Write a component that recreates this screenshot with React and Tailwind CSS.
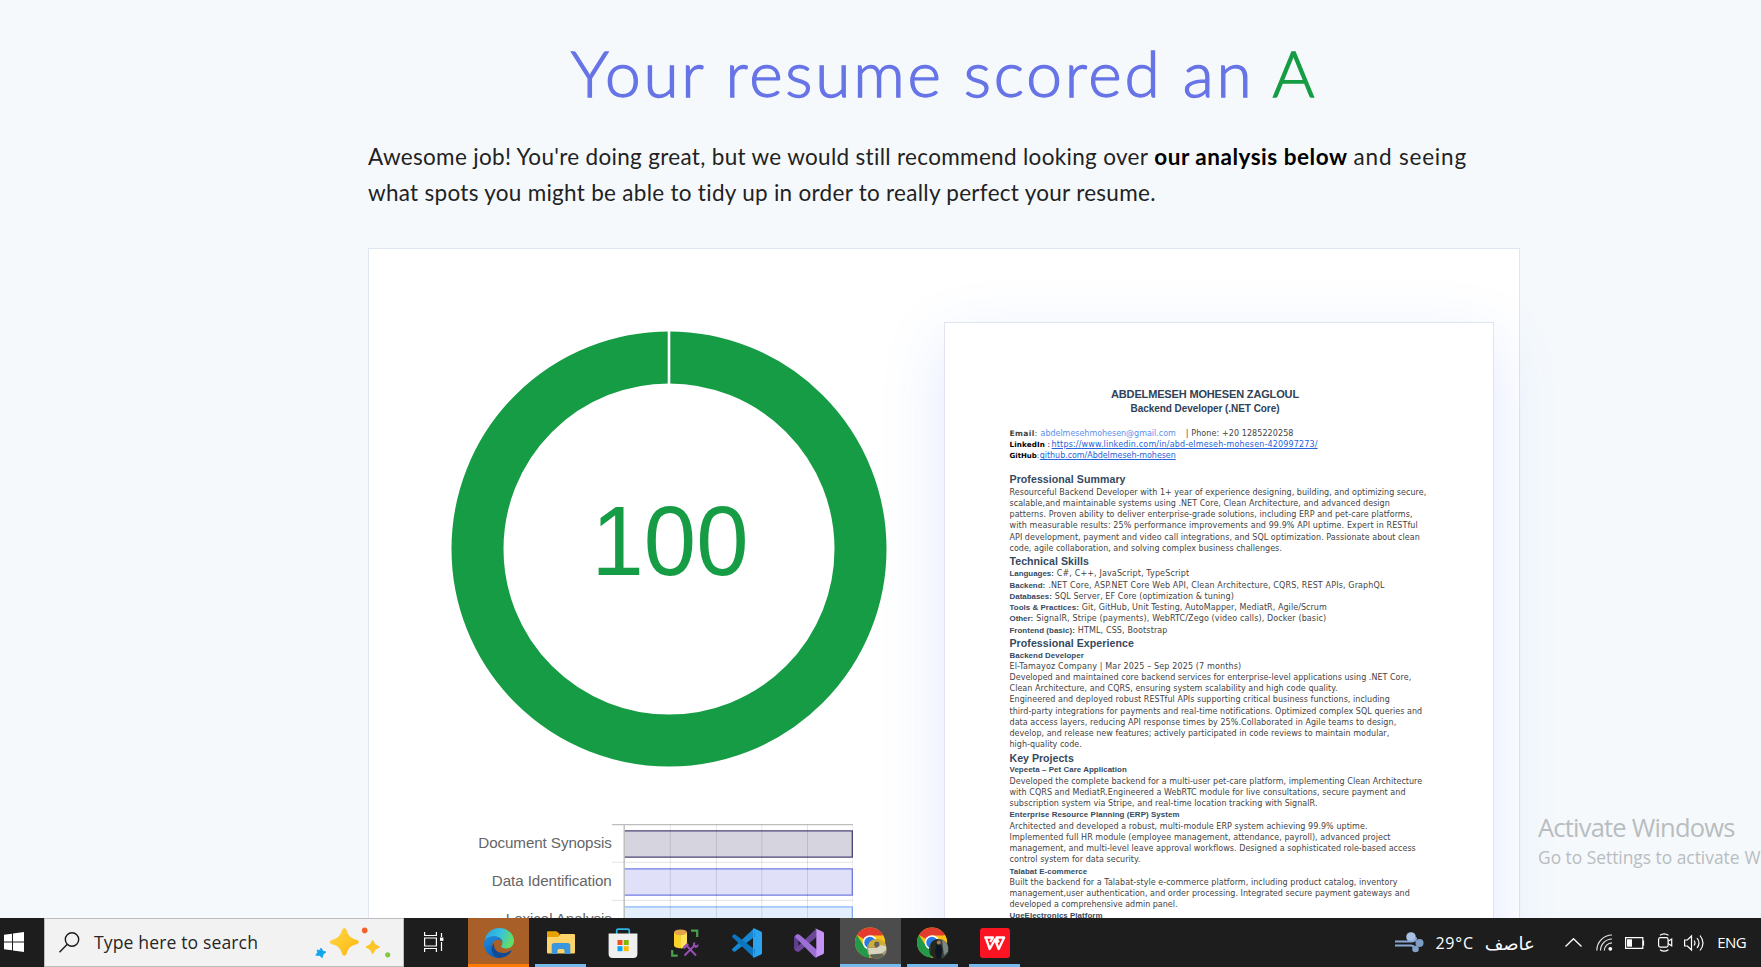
import { useLayoutEffect, useRef } from "react";

/* Text run whose tracking is adjusted so it spans an exact width. */
function Fit({ w, className = "", children }) {
  const ref = useRef(null);
  useLayoutEffect(() => {
    const el = ref.current;
    el.style.letterSpacing = "0px";
    const natural = el.getBoundingClientRect().width;
    el.style.letterSpacing = `${(w - natural) / (el.textContent.length - 0.5)}px`;
  }, [w]);
  return (
    <span ref={ref} className={`inline-block whitespace-pre ${className}`}>
      {children}
    </span>
  );
}

const BODY = [
  ["h", "Professional Summary", 116, 14.4],
  ["b", "Resourceful Backend Developer with 1+ year of experience designing, building, and optimizing secure,", 416.7],
  ["b", "scalable,and maintainable systems using .NET Core, Clean Architecture, and advanced design", 380.3],
  ["b", "patterns. Proven ability to deliver enterprise-grade solutions, including ERP and pet-care platforms,", 403],
  ["b", "with measurable results: 25% performance improvements and 99.9% API uptime. Expert in RESTful", 408.3],
  ["b", "API development, payment and video call integrations, and SQL optimization. Passionate about clean", 410.3],
  ["b", "code, agile collaboration, and solving complex business challenges.", 272.3],
  ["h", "Technical Skills", 79.3, 14.3],
  ["k", "Languages:", 44.3, "C#, C++, JavaScript, TypeScript", 132.3],
  ["k", "Backend:", 35.7, ".NET Core, ASP.NET Core Web API, Clean Architecture, CQRS, REST APIs, GraphQL", 336.3],
  ["k", "Databases:", 42.3, "SQL Server, EF Core (optimization & tuning)", 179],
  ["k", "Tools & Practices:", 69.3, "Git, GitHub, Unit Testing, AutoMapper, MediatR, Agile/Scrum", 245],
  ["k", "Other:", 23.7, "SignalR, Stripe (payments), WebRTC/Zego (video calls), Docker (basic)", 290],
  ["k", "Frontend (basic):", 65.3, "HTML, CSS, Bootstrap", 89.7],
  ["h", "Professional Experience", 124.3, 13.7],
  ["s", "Backend Developer", 74.3],
  ["b", "El-Tamayoz Company | Mar 2025 – Sep 2025 (7 months)", 231.7],
  ["b", "Developed and maintained core backend services for enterprise-level applications using .NET Core,", 401.7],
  ["b", "Clean Architecture, and CQRS, ensuring system scalability and high code quality.", 328],
  ["b", "Engineered and deployed robust RESTful APIs supporting critical business functions, including", 380.3],
  ["b", "third-party integrations for payments and real-time notifications. Optimized complex SQL queries and", 412.7],
  ["b", "data access layers, reducing API response times by 25%.Collaborated in Agile teams to design,", 386.7],
  ["b", "develop, and release new features; actively participated in code reviews to maintain modular,", 379.7],
  ["b", "high-quality code.", 72.3],
  ["h", "Key Projects", 64.3, 13.7],
  ["s", "Vepeeta – Pet Care Application", 117.3],
  ["b", "Developed the complete backend for a multi-user pet-care platform, implementing Clean Architecture", 412.7],
  ["b", "with CQRS and MediatR.Engineered a WebRTC module for live consultations, secure payment and", 396],
  ["b", "subscription system via Stripe, and real-time location tracking with SignalR.", 308],
  ["s", "Enterprise Resource Planning (ERP) System", 170],
  ["b", "Architected and developed a robust, multi-module ERP system achieving 99.9% uptime.", 358],
  ["b", "Implemented full HR module (employee management, attendance, payroll), advanced project", 381],
  ["b", "management, and multi-level leave approval workflows. Designed a sophisticated role-based access", 406.3],
  ["b", "control system for data security.", 130.7],
  ["s", "Talabat E-commerce", 77.7],
  ["b", "Built the backend for a Talabat-style e-commerce platform, including product catalog, inventory", 388],
  ["b", "management,user authentication, and order processing. Integrated secure payment gateways and", 400.3],
  ["b", "developed a comprehensive admin panel.", 168],
  ["s", "UgeElectronics Platform", 93],
];

function ResumeLine({ row }) {
  const [kind, text, w, extra, w2] = row;
  if (kind === "h")
    return (
      <div className="flex items-center font-['Liberation_Sans',sans-serif] text-[10.6px] leading-none font-bold text-[#34495e]" style={{ height: extra }}>
        <Fit w={w}>{text}</Fit>
      </div>
    );
  if (kind === "s")
    return (
      <div className="flex h-[11.24px] items-center font-['Liberation_Sans',sans-serif] text-[7.9px] leading-none font-bold text-[#34495e]">
        <Fit w={w}>{text}</Fit>
      </div>
    );
  if (kind === "k")
    return (
      <div className="flex h-[11.28px] items-center gap-[3px] leading-none">
        <Fit w={w} className="font-['Liberation_Sans',sans-serif] text-[7.9px] font-bold text-[#34495e]">{text}</Fit>
        <Fit w={w2}>{extra}</Fit>
      </div>
    );
  return (
    <div className="flex h-[11.24px] items-center leading-none">
      <Fit w={w}>{text}</Fit>
    </div>
  );
}

function Resume() {
  return (
    <div className="h-[700px] w-[550px] shrink-0 border border-[#dfe4f0] bg-white pt-[64.5px] pl-[64.5px] font-['DejaVu_Sans',sans-serif] text-[8px] text-[#444] shadow-[0_20px_60px_rgba(70,120,255,0.16)]">
      <div className="flex w-[391px] flex-col items-center font-['Liberation_Sans',sans-serif] leading-none font-bold text-[#2f4256]">
        <div className="flex h-[14px] items-center text-[11px]">
          <Fit w={188}>ABDELMESEH MOHESEN ZAGLOUL</Fit>
        </div>
        <div className="flex h-[14px] items-center text-[10px]">
          <Fit w={149}>Backend Developer (.NET Core)</Fit>
        </div>
      </div>
      <div className="mt-[12.5px] flex h-[11.4px] items-center leading-none">
        <span className="flex w-[31px]">
          <Fit w={28} className="text-[7.6px]"><b>Email</b>:</Fit>
        </span>
        <Fit w={135.3} className="text-[#5b8ff0]">abdelmesehmohesen@gmail.com</Fit>
        <Fit w={107.7} className="ml-[10px]">| Phone: +20 1285220258</Fit>
      </div>
      <div className="flex h-[11.4px] items-center gap-[1.5px] leading-none">
        <Fit w={40.5} className="text-[7.2px] text-black"><b>LinkedIn</b> :</Fit>
        <Fit w={266} className="text-[#2563d8] underline">https://www.linkedin.com/in/abd-elmeseh-mohesen-420997273/</Fit>
      </div>
      <div className="mb-[10.4px] flex h-[11.4px] items-center gap-[0.6px] leading-none">
        <Fit w={29.7} className="text-[7px] text-black"><b>GitHub</b>:</Fit>
        <Fit w={136} className="text-[#2563d8] underline">github.com/Abdelmeseh-mohesen</Fit>
      </div>
      {BODY.map((row, i) => (
        <ResumeLine key={i} row={row} />
      ))}
    </div>
  );
}

function Donut() {
  return (
    <svg width="436" height="436" viewBox="0 0 436 436" className="block">
      <circle cx="218" cy="218" r="191.5" fill="none" stroke="#169c45" strokeWidth="52" />
      <path d="M218 0V54" stroke="#fff" strokeWidth="2.6" />
      <text x="140.5" y="244" fontSize="98" textLength="157" lengthAdjust="spacingAndGlyphs" fill="#169c45" className="font-['Liberation_Sans',sans-serif]">100</text>
    </svg>
  );
}

const BARS = [
  { y: 6, label: "Document Synopsis", w: 133.5, stroke: "#4a4578", fill: "#d6d5df" },
  { y: 44, label: "Data Identification", w: 120, stroke: "#727ce6", fill: "#e0e1f9" },
  { y: 82, label: "Lexical Analysis", w: 106, stroke: "#86b6f7", fill: "#e3eefc" },
];

function BarChart() {
  return (
    <svg width="400" height="110" viewBox="0 0 400 110" className="block">
      {BARS.map((b) => (
        <g key={b.label}>
          <rect x="171" y={b.y + 0.8} width="228.5" height="26.4" fill={b.fill} />
          <path d={`M171 ${b.y + 0.8}h228.3v26.4H171`} fill="none" stroke={b.stroke} strokeWidth="1.3" />
          <text x="158.8" y={b.y + 18.4} textAnchor="end" textLength={b.w} fontSize="15.2" fill="#666" className="font-['Liberation_Sans',sans-serif]">{b.label}</text>
        </g>
      ))}
      <path d="M217.3 1v109M263.4 1v109M308.8 1v109M354.5 1v109M400 1v109M159 38.3h12M159 76.3h12" stroke="#000" strokeOpacity="0.11" strokeWidth="1" />
      <path d="M171 38.3h229M171 76.3h229" stroke="#000" strokeOpacity="0.11" />
      <path d="M159 0.6h241" stroke="#bdbdbd" strokeWidth="1.2" />
      <path d="M171.2 1v109" stroke="#bdbdbd" strokeWidth="1.4" />
    </svg>
  );
}

const EdgeIcon = () => (
  <svg width="30" height="30" viewBox="0 0 30 30">
    <defs>
      <linearGradient id="e1" x1="0" y1="0" x2="1" y2="0.3">
        <stop offset="0" stopColor="#2a9fe0" />
        <stop offset="0.55" stopColor="#35c1e0" />
        <stop offset="1" stopColor="#62dd6a" />
      </linearGradient>
      <linearGradient id="e2" x1="0" y1="0" x2="0.4" y2="1">
        <stop offset="0" stopColor="#1f8ee0" />
        <stop offset="1" stopColor="#0b62b8" />
      </linearGradient>
    </defs>
    <path d="M0.6 12.5C1.8 5.2 8 0 15 0c8.600 0 15 6 15 12.700 0 4.600-3.400 7.800-7.700 7.800-3.600 0-5.100-1.300-5.100-2.300 0-.8 1.200-1.200 1.200-3.500C18.400 11.600 15 8.600 11 8.600c-5 0-9 2-10.400 3.900z" fill="url(#e1)" />
    <path d="M.4 13C2 9.800 6 8.300 10 8.300c4.500 0 8.400 2.400 8.400 6-1.200-2-3-2.600-4.600-2.600C10 11.700 8 15 8 18.600c0 5 3.800 9.300 8.300 10.400-.8.800-2 1-3 .9C5 29 0 22.500 0 16z" fill="url(#e2)" />
    <path d="M10.300 15.200c-1.400 5.400 2.600 9.800 8.200 9.800 4 0 6.700-1.600 8.200-2.500.6-.3 1 .2.7.8-2 3.600-6.600 6.700-11.900 6.700C10.800 30 7.600 25 7.600 20.500c0-2.200 1-4.300 2.700-5.300z" fill="#124a96" />
  </svg>
);

const FolderIcon = () => (
  <svg width="28" height="24" viewBox="0 0 28 24">
    <path d="M0 1.200Q0 .2 1 .2h8.500l3 2.600V8H0z" fill="#e8a200" />
    <path d="M0 6h11l2.500-3H27q1 0 1 1v17.500q0 1-1 1H1q-1 0-1-1z" fill="#fdd469" />
    <path d="M4.700 23V14.500q0-2.500 2.500-2.500h13.600q2.500 0 2.500 2.500V23h-5.800v-3.500q0-1.500-1.500-1.500h-4q-1.500 0-1.500 1.500V23z" fill="#3a96dd" />
  </svg>
);

const StoreIcon = () => (
  <svg width="30" height="30" viewBox="0 0 30 30">
    <path d="M8.700 7V2.800q0-1.600 1.600-1.600h9.400q1.600 0 1.600 1.600V7" fill="none" stroke="#2db4e8" strokeWidth="1.700" />
    <path d="M.6 5.500h28.800V26q0 4-4 4H4.600q-4 0-4-4z" fill="#f0f0f0" />
    <path d="M9.500 12h5v5h-5z" fill="#f25022" />
    <path d="M15.700 12h5v5h-5z" fill="#7fba00" />
    <path d="M9.500 18.200h5v5h-5z" fill="#00a4ef" />
    <path d="M15.700 18.200h5v5h-5z" fill="#ffb900" />
  </svg>
);

const SqlIcon = () => (
  <svg width="28" height="28" viewBox="0 0 28 28">
    <path d="M3 3.500v13c0 1.600 3.200 2.800 6.500 2.800s6.500-1.200 6.500-2.800v-13z" fill="#f8d22a" />
    <path d="M10 6v13.300c3.500 0 6-1.200 6-2.800v-13z" fill="#ffe45c" />
    <ellipse cx="9.500" cy="3.300" rx="6.500" ry="2.900" fill="#e3a34b" />
    <path d="M20 1.700h6.200V8M1.200 21v5.700h5.500" fill="none" stroke="#47a04b" strokeWidth="2.200" />
    <path d="M13.500 26.500 24 16M15.500 16.500l9.500 10" stroke="#9a4fb8" strokeWidth="1.900" />
    <path d="M11.500 18.300l4.500-4.300 2 1.800-4.600 4.400z" fill="#9a4fb8" />
    <path d="M22 14l2.500-.8-.7 2.300 1.700 1 1.800-1.500.2 2.300-2.600 2-3-2.500z" fill="#9a4fb8" />
  </svg>
);

const VsCodeIcon = () => (
  <svg width="30" height="30" viewBox="0 0 30 30">
    <path d="M22 .3 29 3.500q1 .5 1 1.500v20q0 1-1 1.500L22 29.700z" fill="#2ba3ee" />
    <path d="M22 .3 23 8.500 3.200 23.500q-.8.600-1.500 0L.4 22.200q-.7-.7 0-1.400z" fill="#1687d2" />
    <path d="M22 29.700 23 21.500 3.200 6.500q-.8-.6-1.500 0L.4 7.800q-.7.700 0 1.400z" fill="#0d74c0" />
    <path d="M22 .3v29.400l-1-1V1z" fill="#2ba3ee" />
  </svg>
);

const VsIcon = () => (
  <svg width="30" height="30" viewBox="0 0 30 30">
    <path d="M0 8.500 4.500 6v18L0 21.500z" fill="#5f3d8b" />
    <path d="M1.500 22.800Q3.800 24.700 6.500 22.500L22.500 9V.4L1 21z" fill="#6c4699" />
    <path d="M1.500 7.200Q3.800 5.300 6.500 7.500L23 22v7.500L20.500 29 1 9z" fill="#9d70d6" />
    <path d="M21 .3 29 3.800q1 .5 1 1.600v19.200q0 1.100-1 1.600l-8 3.500q1.300-.7 1.300-2.500V2.800Q22.300 1 21 .3z" fill="#c493f5" />
  </svg>
);

const ChromeIcon = ({ dark }) => (
  <svg width="32" height="32" viewBox="0 0 32 32">
    <circle cx="15" cy="15.500" r="15" fill="#fbc116" />
    <path d="M15 15.500 2 8A15 15 0 0 1 28 8z" fill="#e33b2e" />
    <path d="M2 8a15 15 0 0 0 12 22.500L21 19 9 19z" fill="#229a4a" />
    <path d="M15 8.500h13.300A15 15 0 0 1 14 30.500L21.200 19z" fill="#fbc116" />
    <circle cx="15" cy="15.500" r="7.300" fill="#fff" />
    <circle cx="15" cy="15.500" r="5.700" fill="#2c7be5" />
    <circle cx="21.800" cy="22" r="10" fill={dark ? "#39453f" : "#a39a76"} />
    {dark ? (
      <g>
        <path d="M14 16a10 10 0 0 1 7-4v20a10 10 0 0 1-8-5z" fill="#24291f" />
        <path d="M25 12.600a10 10 0 0 1 6 7v5l-4 4z" fill="#7c8685" />
        <path d="M19.500 17.500h4.500l1.500 6-1.500 8.300h-4.500L18 24z" fill="#111722" />
        <circle cx="21.800" cy="15.500" r="2" fill="#a87958" />
      </g>
    ) : (
      <g>
        <path d="M14 16a10 10 0 0 1 17 2l-7 3-10-1z" fill="#cfae35" />
        <path d="M13 21h8l3-3 7 1v4l-6 5H14z" fill="#d9d4bd" />
        <path d="M20 14.500l4 .5.5 4-3.500 2-2-3z" fill="#65605a" />
        <path d="M15 27.500l12-1 2 2a10 10 0 0 1-13 1.500z" fill="#5f6455" />
      </g>
    )}
  </svg>
);

const WpsIcon = () => (
  <svg width="30" height="30" viewBox="0 0 30 30">
    <rect width="30" height="30" rx="3" fill="#fb1522" />
    <path d="M4.300 9.500H13l-2.800 4.500M5.700 9.500l4 11.500L15 11.500 18.700 21l5.500-11.500H16.500l2.200 5" fill="none" stroke="#fff" strokeWidth="2.300" strokeLinejoin="round" />
  </svg>
);

const APPS = [
  { id: "edge", icon: <EdgeIcon />, cell: "bg-[#a85f28]", bar: "w-full bg-[#ff7a00]" },
  { id: "explorer", icon: <FolderIcon />, cell: "", bar: "w-[51px] bg-[#76b9ed]" },
  { id: "store", icon: <StoreIcon />, cell: "", bar: "" },
  { id: "sql", icon: <SqlIcon />, cell: "", bar: "" },
  { id: "vscode", icon: <VsCodeIcon />, cell: "", bar: "" },
  { id: "vs", icon: <VsIcon />, cell: "", bar: "" },
  { id: "chrome", icon: <ChromeIcon />, cell: "bg-[#4c4c4c]", bar: "w-full bg-[#76b9ed]" },
  { id: "chrome2", icon: <ChromeIcon dark />, cell: "", bar: "w-[51px] bg-[#76b9ed]" },
  { id: "wps", icon: <WpsIcon />, cell: "", bar: "w-[51px] bg-[#76b9ed]" },
];

function Taskbar() {
  return (
    <footer className="flex h-[49px] shrink-0 bg-[#1d1d1d] font-['Open_Sans','Noto_Sans',sans-serif] text-white">
      <div className="flex w-[44px] items-center pb-px pl-1">
        <svg width="20" height="20" viewBox="0 0 20 20" fill="#fff">
          <path d="M0 2.800 8 1.700V9.400H0zM9 1.500 20 0v9.400H9zM0 10.400h8v7.800L0 17.200zM9 10.400h11V20L9 18.400z" />
        </svg>
      </div>
      <div className="flex w-[360px] items-center border border-[#bcbcbc] bg-[#f2f2f2] pl-[14px]">
        <svg width="21" height="21" viewBox="0 0 21 21" fill="none" stroke="#1a1a1a" strokeWidth="1.400">
          <circle cx="13" cy="7.500" r="6.700" />
          <path d="M8.300 12.300.5 20.200" />
        </svg>
        <Fit w={164} className="ml-[14px] text-[17.600px] text-[#262626]">Type here to search</Fit>
        <svg width="78" height="34" viewBox="0 0 78 34" className="ml-[55px]">
          <defs>
            <linearGradient id="st" x1="0" y1="0" x2="1" y2="1">
              <stop offset="0" stopColor="#ffd84a" />
              <stop offset="1" stopColor="#fbb70d" />
            </linearGradient>
          </defs>
          <path d="M31.300 2q1.800 0 2.600 3 1.600 6.500 8.500 8.400 3.400.8 3.400 2.600t-3.400 2.600q-6.900 1.900-8.500 8.400-.8 3-2.600 3t-2.600-3q-1.600-6.500-8.500-8.400-3.400-.8-3.400-2.600t3.400-2.600q6.900-1.900 8.500-8.400.8-3 2.600-3z" fill="url(#st)" />
          <path d="M59.700 14.200q1 0 1.400 1.800.8 2.800 3.600 3.600 1.900.5 1.900 1.500t-1.900 1.500q-2.800.8-3.600 3.600-.4 1.800-1.400 1.800t-1.400-1.800q-.8-2.800-3.600-3.600-1.900-.5-1.900-1.500t1.900-1.500q2.800-.8 3.600-3.600.4-1.800 1.400-1.800z" fill="#fcc52a" />
          <path d="M8 22l1.800 3 3.200 1-2.800 2.200-1 3.600-2.500-2.400-3.900-.2 1.800-2.700-.4-2.500 2.800.4z" fill="#12a5ee" stroke="#12a5ee" strokeWidth=".8" strokeLinejoin="round" />
          <circle cx="51.700" cy="4.400" r="2.800" fill="#f2622e" />
          <circle cx="74.700" cy="28.800" r="2.600" fill="#85c940" />
        </svg>
      </div>
      <div className="flex w-[64px] items-center pb-px pl-5">
        <svg width="21" height="20" viewBox="0 0 21 20" fill="none" stroke="#fff" strokeWidth="1.200">
          <path d="M.6 0v3.500h11.800V0M.6 20v-3.500h11.800V20M.6 6h11.800v8H.6zM17.500 1v4M17.500 10v9" />
          <path d="M16 5.500h3.400v3.400H16z" fill="#fff" stroke="none" />
        </svg>
      </div>
      <div className="flex gap-px">
        {APPS.map((a) => (
          <div key={a.id} className={`flex w-[61px] flex-col items-center ${a.cell}`}>
            <div className="flex flex-1 items-center pt-[3px]">{a.icon}</div>
            <div className={`h-[3px] ${a.bar}`} />
          </div>
        ))}
      </div>
      <div className="ml-auto flex items-center pr-[15px]">
        <svg width="29" height="21" viewBox="0 0 29 21" fill="none">
          <circle cx="16" cy="5" r="4.800" fill="#a9c1e2" />
          <circle cx="24.500" cy="11" r="4" fill="#7f9dc4" />
          <path d="M0 9.500h17q4-.5 4-4M0 13.500h16q4 .5 4.500 4" stroke="#8aa9d4" strokeWidth="2.200" />
          <circle cx="20.500" cy="17" r="3.300" fill="#7fa0c8" />
        </svg>
        <Fit w={38} className="ml-[11px] text-[16px]">29°C</Fit>
        <span className="ml-[10px] w-[51px] pt-px text-right font-['DejaVu_Sans',sans-serif] text-[18px] whitespace-nowrap" dir="rtl">عاصف</span>
        <svg width="17" height="9" viewBox="0 0 17 9" fill="none" stroke="#fff" strokeWidth="1.300" className="ml-[30px]">
          <path d="M.5 8.500l8-7.800 8 7.800" />
        </svg>
        <svg width="17" height="17" viewBox="0 0 17 17" fill="none" stroke="#e6e6e6" strokeWidth="1.200" className="ml-[14px]">
          <path d="M.8 16.500A15.500 15.500 0 0 1 16 1M4.500 16.500A11.700 11.700 0 0 1 16 5M8.300 16.500A7.800 7.800 0 0 1 16 8.800" />
          <circle cx="14.300" cy="14.800" r="1.900" fill="#fff" stroke="none" />
        </svg>
        <svg width="20" height="12" viewBox="0 0 20 12" className="ml-[12px]">
          <path d="M.6.6h17.200v10.800H.6zM18.500 3.500v5" fill="none" stroke="#fff" strokeWidth="1.200" />
          <path d="M2 2.300h5v7.400H2z" fill="#fff" />
        </svg>
        <svg width="15" height="19" viewBox="0 0 15 19" fill="none" stroke="#fff" strokeWidth="1.200" className="ml-[13px]">
          <rect x=".6" y="4.600" width="9.500" height="9.500" rx="1.800" />
          <path d="M10 8.300l3.700-2.300v6.800L10 10.500M2 2.200q4-2.800 8.500 0M2 16.700q4 2.800 8.500 0" />
        </svg>
        <svg width="21" height="18" viewBox="0 0 21 18" fill="none" stroke="#fff" strokeWidth="1.200" className="ml-[11px]">
          <path d="M.6 6h2.800L7.500 2v14l-4.100-4H.6zM10 6.500q2 2.500 0 5M13 4q4 5 0 10M16 1.500q6 7.500 0 15" />
        </svg>
        <Fit w={29} className="ml-[12.500px] text-[15px]">ENG</Fit>
      </div>
    </footer>
  );
}

export default function App() {
  return (
    <div className="relative flex h-[967px] w-full flex-col overflow-hidden bg-[#f5f9fc]">
      <main className="h-[918px] overflow-hidden pl-[368px] font-['Lato',sans-serif]">
        <h1 className="flex h-[76px] w-[1152px] justify-center pt-[33px] text-[64px] leading-[80px] font-light text-[#6774e6] [-webkit-text-stroke:1.3px]">
          <Fit w={745}>Your resume scored an <span className="text-[#169c45]">A</span></Fit>
        </h1>
        <div className="mt-[63px] h-[109px] text-[22.5px] leading-[36px] text-[#222]">
          <div className="flex">
            <Fit w={780.500}>Awesome job! You're doing great, but we would still recommend looking over</Fit>
            <Fit w={193} className="ml-[6px] font-bold text-black">our analysis below</Fit>
            <Fit w={113} className="ml-[6px]">and seeing</Fit>
          </div>
          <Fit w={788}>what spots you might be able to tidy up in order to really perfect your resume.</Fit>
        </div>
        <section className="flex h-[800px] w-[1152px] justify-between border border-[#dfe6ef] bg-white pr-[25px] pl-[82px]">
          <div className="flex flex-col pt-[82px]">
            <Donut />
            <div className="mt-[57px] pl-[2px]">
              <BarChart />
            </div>
          </div>
          <div className="pt-[73px]">
            <Resume />
          </div>
        </section>
      </main>
      <Taskbar />
      <div className="absolute top-[809px] left-[1538px] w-[223px] overflow-hidden font-['Open_Sans','Noto_Sans',sans-serif] text-[#b9bdc0]">
        <div className="h-[36px] text-[25.500px] leading-[36px]">
          <Fit w={197}>Activate Windows</Fit>
        </div>
        <div className="flex h-[24px] text-[17.400px] leading-[24px]">
          <Fit w={201.500}>Go to Settings to activate</Fit>
          <span className="ml-[5px]">Windows.</span>
        </div>
      </div>
    </div>
  );
}
